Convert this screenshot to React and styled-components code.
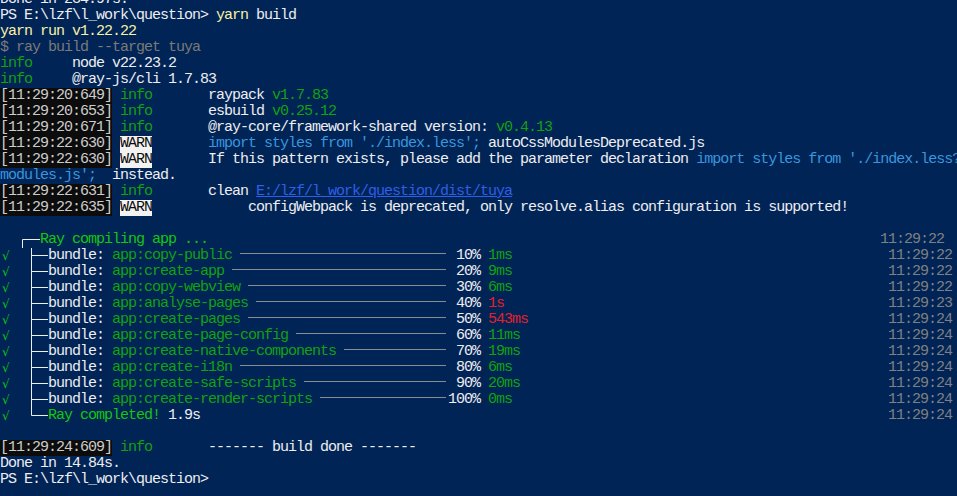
import React from "react";
import styled, { createGlobalStyle } from "styled-components";

const Global = createGlobalStyle`
  html, body { margin: 0; padding: 0; background: #012456; overflow: hidden; }
`;

const Terminal = styled.div`
  width: 960px;
  height: 496px;
  overflow: hidden;
  background: #012456;
  color: #eeedf0;
  font-family: "Liberation Mono", "DejaVu Sans Mono", monospace;
  font-size: 15px;
  letter-spacing: -1px;
  line-height: 16px;
`;

const Screen = styled.div`
  margin-top: -8px;
`;

const Line = styled.div`
  display: flex;
  align-items: flex-start;
  height: 16px;
`;

const Text = styled.span`
  white-space: pre;
`;

const Stamp = styled.span`
  margin-left: auto;
  margin-right: ${(p) => p.$right}px;
  color: #808080;
  white-space: pre;
`;

const Ts = styled.span`
  display: inline-block;
  vertical-align: top;
  width: 112px;
  height: 16px;
  background: #0c0c0c;
  color: #cccccc;
`;

const Warn = styled.span`
  display: inline-block;
  vertical-align: top;
  width: 32px;
  height: 16px;
  background: #f2f2f2;
  color: #0c0c0c;
`;

const Green = styled.span`
  color: #13a10e;
`;

const Bright = styled.span`
  color: #16c60c;
`;

const Yellow = styled.span`
  color: #f9f1a5;
`;

const Dim = styled.span`
  color: #7a7a7a;
`;

const Cyan = styled.span`
  color: #3a96dd;
`;

const Red = styled.span`
  color: #e3202c;
`;

const Link = styled.span`
  color: #2f5ee8;
  text-decoration: underline;
  text-underline-offset: 1px;
`;

const Ruler = styled.span`
  display: inline-block;
  vertical-align: top;
  height: 16px;
  width: ${(p) => p.$w}px;
  margin-right: 2px;
  background: linear-gradient(#8c8c8c, #8c8c8c) 0 5px / 100% 1px no-repeat;
`;

const CheckCell = styled.span`
  display: inline-block;
  vertical-align: top;
  width: 24px;
  height: 16px;
  color: #16c60c;
  font-family: "DejaVu Sans", sans-serif;
  font-size: 12px;
  letter-spacing: 0;
  padding-left: 2px;
  box-sizing: border-box;
  font-style: italic;
`;

const GlyphBox = styled.svg`
  display: inline-block;
  vertical-align: top;
  width: 24px;
  height: 16px;
`;

function Tree({ kind }) {
  const c = "#eeedf0";
  if (kind === "corner")
    return (
      <GlyphBox viewBox="0 0 24 16">
        <path d="M6.5 16V7.5H24" stroke={c} strokeWidth="1" fill="none" />
      </GlyphBox>
    );
  if (kind === "end")
    return (
      <GlyphBox viewBox="0 0 24 16">
        <path d="M7.5 0V7.5H24" stroke={c} strokeWidth="1" fill="none" />
      </GlyphBox>
    );
  return (
    <GlyphBox viewBox="0 0 24 16">
      <path d="M7.5 0V16M7.5 7.5H24" stroke={c} strokeWidth="1" fill="none" />
    </GlyphBox>
  );
}

const bundles = [
  ["copy-public", "10%", "1ms", false, "11:29:22"],
  ["create-app", "20%", "9ms", false, "11:29:22"],
  ["copy-webview", "30%", "6ms", false, "11:29:22"],
  ["analyse-pages", "40%", "1s", true, "11:29:23"],
  ["create-pages", "50%", "543ms", true, "11:29:24"],
  ["create-page-config", "60%", "11ms", false, "11:29:24"],
  ["create-native-components", "70%", "19ms", false, "11:29:24"],
  ["create-i18n", "80%", "6ms", false, "11:29:24"],
  ["create-safe-scripts", "90%", "20ms", false, "11:29:24"],
  ["create-render-scripts", "100%", "0ms", false, "11:29:24"],
];

function BundleRow({ name, pct, time, slow, stamp }) {
  const full = "app:" + name;
  const start = 14 + full.length + 1;
  const w = (56 - start) * 8 - 2;
  const Time = slow ? Red : Green;
  return (
    <Line>
      <Text>
        <CheckCell>√</CheckCell>
        <Tree kind="tee" />
        {"bundle: "}
        <Green>{full}</Green>
        {" "}
        <Ruler $w={w} />
        {pct.padStart(4, " ") + " "}
        <Time>{time}</Time>
      </Text>
      <Stamp $right={8}>{stamp}</Stamp>
    </Line>
  );
}

export default function App() {
  return (
    <>
      <Global />
      <Terminal>
        <Screen>
          <Line><Text>Done in 234.97s.</Text></Line>
          <Line>
            <Text>
              {"PS E:\\lzf\\l_work\\question> "}
              <Yellow>yarn</Yellow>
              {" build"}
            </Text>
          </Line>
          <Line><Text><Yellow>yarn run v1.22.22</Yellow></Text></Line>
          <Line><Text><Dim>$ ray build --target tuya</Dim></Text></Line>
          <Line><Text><Green>info</Green>{"     node v22.23.2"}</Text></Line>
          <Line><Text><Green>info</Green>{"     @ray-js/cli 1.7.83"}</Text></Line>
          <Line>
            <Text>
              <Ts>[11:29:20:649]</Ts>{" "}<Green>info</Green>{"       raypack "}<Green>v1.7.83</Green>
            </Text>
          </Line>
          <Line>
            <Text>
              <Ts>[11:29:20:653]</Ts>{" "}<Green>info</Green>{"       esbuild "}<Green>v0.25.12</Green>
            </Text>
          </Line>
          <Line>
            <Text>
              <Ts>[11:29:20:671]</Ts>{" "}<Green>info</Green>{"       @ray-core/framework-shared version: "}<Green>v0.4.13</Green>
            </Text>
          </Line>
          <Line>
            <Text>
              <Ts>[11:29:22:630]</Ts>{" "}<Warn>WARN</Warn>{"       "}
              <Cyan>import styles from './index.less';</Cyan>{" autoCssModulesDeprecated.js"}
            </Text>
          </Line>
          <Line>
            <Text>
              <Ts>[11:29:22:630]</Ts>{" "}<Warn>WARN</Warn>
              {"       If this pattern exists, please add the parameter declaration "}
              <Cyan>import styles from './index.less?</Cyan>
            </Text>
          </Line>
          <Line>
            <Text>
              <Cyan>modules.js';</Cyan>{"  instead."}
            </Text>
          </Line>
          <Line>
            <Text>
              <Ts>[11:29:22:631]</Ts>{" "}<Green>info</Green>{"       clean "}
              <Link>E:/lzf/l_work/question/dist/tuya</Link>
            </Text>
          </Line>
          <Line>
            <Text>
              <Ts>[11:29:22:635]</Ts>{" "}<Warn>WARN</Warn>
              {"            configWebpack is deprecated, only resolve.alias configuration is supported!"}
            </Text>
          </Line>
          <Line />
          <Line>
            <Text>
              {"  "}
              <Tree kind="corner" />
              <Bright>Ray compiling app ...</Bright>
            </Text>
            <Stamp $right={16}>11:29:22</Stamp>
          </Line>
          {bundles.map(([name, pct, time, slow, stamp]) => (
            <BundleRow key={name} name={name} pct={pct} time={time} slow={slow} stamp={stamp} />
          ))}
          <Line>
            <Text>
              <CheckCell>√</CheckCell>
              <Tree kind="end" />
              <Bright>Ray completed!</Bright>{" 1.9s"}
            </Text>
            <Stamp $right={8}>11:29:24</Stamp>
          </Line>
          <Line />
          <Line>
            <Text>
              <Ts>[11:29:24:609]</Ts>{" "}<Green>info</Green>{"       ------- build done -------"}
            </Text>
          </Line>
          <Line><Text>Done in 14.84s.</Text></Line>
          <Line><Text>{"PS E:\\lzf\\l_work\\question>"}</Text></Line>
        </Screen>
      </Terminal>
    </>
  );
}
